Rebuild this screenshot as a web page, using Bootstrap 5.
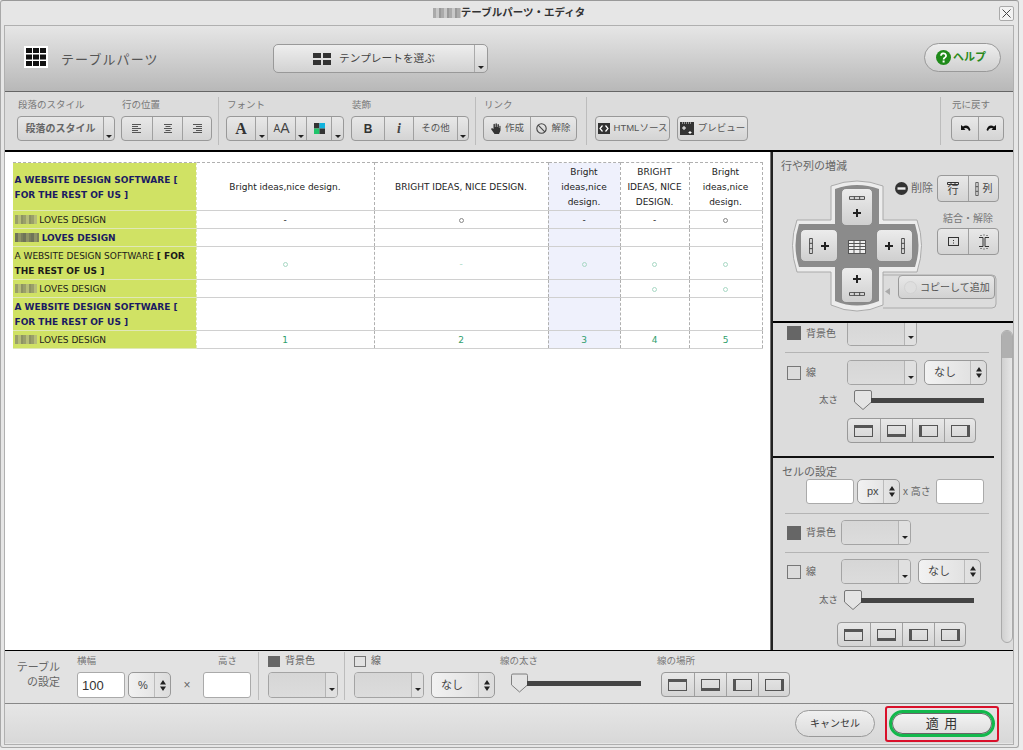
<!DOCTYPE html>
<html lang="ja">
<head>
<meta charset="utf-8">
<title>テーブルパーツ・エディタ</title>
<link href="https://cdn.jsdelivr.net/npm/bootstrap@5.3.0/dist/css/bootstrap.min.css" rel="stylesheet">
<style>
html,body{height:100%;overflow:hidden}
body{background:#ececec;font-family:"Liberation Sans","Noto Sans CJK JP",sans-serif;color:#666;font-size:10px}
svg{display:block;flex:none}
.win{width:1019px;height:748px;background:#e6e6e6;border:1px solid #a8a8a8;border-top-color:#999;border-radius:3px;padding:0 4px 0 3px}
.titlebar{height:24px;position:relative;font-size:10.5px;font-weight:700;color:#333}
.closer{position:absolute;right:0;top:5px;width:15px;height:15px;border:1px solid #aaa;border-radius:2px;background:#f2f2f2;padding:0}
.frame{width:1010px;height:720px;border:1px solid #b0b0b0}
.heading{height:66px;background:linear-gradient(#e6e6e6,#b8b8b8);border-bottom:1px solid #666;padding:18px 12px 0 19px}
.heading-title{font-size:13px;letter-spacing:1.1px;color:#555;margin:6px 0 0 13px;width:212px;flex:none}
.logo{margin-top:2px}
.tplbtn{width:215px;height:29px;border:1px solid #999;border-radius:5px;background:linear-gradient(#eee,#d2d2d2)}
.tplmain{width:201px;font-size:10.7px;color:#444;gap:8px}
.tplcaret{width:13px;border-left:1px solid #aaa}
.helpbtn{width:77px;height:29px;border:1px solid #999;border-radius:15px;background:linear-gradient(#eee,#d0d0d0);color:#2a8a1c;font-size:11px;font-weight:700;gap:2px;padding:0 0 0 11px;margin-top:-1px}
.toolbar{height:60px;background:#dcdcdc;border-bottom:2px solid #000;padding:0 0 0 12px}
.stack{padding-top:5px;flex:none}
.lbl{height:16px;line-height:16px;font-size:9.5px;color:#777;margin:0 0 3px 1px;white-space:nowrap}
.vsep{width:1px;height:48px;background:#bcbcbc;margin-top:5px;flex:none}
.tb.btn-group{height:25px;border:1px solid #999;border-radius:4px;background:linear-gradient(#e8e8e8,#d4d4d4);overflow:hidden;flex:none;vertical-align:top}
.tb.btn-group>.btn.tbtn{flex:none;height:100%;padding:0;border:0;border-left:1px solid #a0a0a0;border-radius:0;margin-left:0;background:transparent;color:#555;font-size:9.5px;display:flex;align-items:center;justify-content:center;white-space:nowrap}
.tb.btn-group>.btn.tbtn:first-child{border-left:0}
.tall.btn-group{height:27px}
.w11{width:11px}.w12{width:12px}.w26{width:26px}.w25{width:25px}.w28{width:28px}.w29{width:29px}.w30{width:30px}.w32{width:32px}.w44{width:44px}.w46{width:46px}.w85{width:85px}.w73{width:73px}.w69{width:69px}
.caret{width:0;height:0;border:3px solid transparent;border-top:3px solid #222;border-bottom:0;margin-top:15px}
.caret-low{margin-top:21px}
.boldjp{font-weight:700;font-size:10px;color:#666}
.main{height:498px}
.canvas{background:#fff;padding:10px 7px 0 8px;flex:none;width:765px}
.rule{width:2px;background:#222;flex:none;margin-left:1px;box-shadow:-1px 0 0 #777}
table.sheet{width:749px;table-layout:fixed;border-collapse:collapse;font-family:"DejaVu Sans",sans-serif;font-size:9px;line-height:15px;color:#222;margin:0}
table.sheet td{padding:2px 2px 0;text-align:center;vertical-align:middle;border:solid #d0d0d0;border-width:1px;border-left:1px dashed #b0b0b0;border-right:1px dashed #b0b0b0;background:#fff;box-shadow:none;color:#222}
table.sheet tr:first-child td{border-top:1px dashed #b0b0b0}
table.sheet td.side{background:#d0e264;text-align:left;color:#1a1a1a;border-color:#e0e8b8;border-left:0;padding-left:1.5px}
table.sheet td.side b{font-weight:700}
table.sheet td.navy{color:#1b1b62}
table.sheet td.sel{background:#eff1fc}
table.sheet td.grn{color:#2f9e6c}
table.sheet td.pale{color:#a8d8c4}
table.sheet td.gry{color:#888}
.ring{display:inline-block;width:5px;height:5px;border:1px solid currentColor;border-radius:50%;vertical-align:0}
.h49{height:48px}.h18{height:18px}.h33{height:33px}
.c1{width:183px}.c2{width:178px}.c3{width:174px}.c4{width:72px}.c5{width:69px}.c6{width:73px}
.pix{display:inline-block;width:22px;height:9px;vertical-align:-1px;filter:blur(.6px);background:repeating-linear-gradient(90deg,#9aa06a 0 3px,#b6bd78 3px 6px,#8d9362 6px 8px)}
.pix2{width:24px;background:repeating-linear-gradient(90deg,#6f7458 0 3px,#8e9366 3px 6px,#7a7f5c 6px 8px)}
.pix3{width:28px;height:10px;vertical-align:-2px;background:repeating-linear-gradient(90deg,#aaa 0 3px,#c8c8c8 3px 6px,#999 6px 8px)}
.side-panel{width:240px;background:#dcdcdc;flex:none}
.top-panel{height:171px;padding:6px 0 0 8px;border-bottom:2px solid #000}
.sec-title{height:16px;line-height:16px;font-size:11px;color:#666;white-space:nowrap}
.cross{position:relative;width:100px;height:133px;margin:6px 0 0 14px;flex:none}
.cross-art{position:absolute;left:0;top:0;overflow:visible}
.pad{position:absolute;border:1px solid #8a8a8a;border-radius:5px;background:linear-gradient(#ececec,#cfcfcf);padding:0;display:flex;flex-direction:column;align-items:center;justify-content:center;gap:8px}
.pad-h{flex-direction:row;gap:7px}
.pad-t{left:46px;top:8px;width:32px;height:38px}
.pad-l{left:5px;top:49px;width:38px;height:33px}
.pad-r{left:81px;top:49px;width:37px;height:33px}
.pad-b{left:46px;top:87px;width:32px;height:36px}
.pad-c{position:absolute;left:53px;top:60px}
.sidekeys{width:104px;margin-top:1px;flex:none}
.del-txt{font-size:11px;color:#666;margin:0 4px 0 3px}
.kk{font-size:11px;line-height:11px;color:#444}
.kk2{font-size:10px;color:#444}
.mergetxt{font-size:10px;color:#777;text-align:right;margin:9px 6px 2px 0;height:15px;line-height:15px}
.copybtn{width:97px;height:24px;margin:20px 0 0 3px;border:1px solid #999;border-radius:4px;background:linear-gradient(#e8e8e8,#d2d2d2);font-size:10px;color:#555;padding:0 0 0 5px;gap:3px;white-space:nowrap}
.ghost{width:13px;height:13px;border-radius:50%;background:#dedede;border:1px solid #d2d2d2;flex:none}
.scroller{height:327px;overflow:hidden;position:relative}
.scrollin{margin-top:-3px}
.track{position:absolute;left:228px;top:7px;width:12px;height:313px;border:1px solid #aaa;border-radius:6px;background:linear-gradient(90deg,#d0d0d0,#e6e6e6)}
.track::before{content:"";display:block;height:27px;background:#b0b0b0;border-radius:5px 5px 0 0}
.prow{display:flex;align-items:center;padding-left:14px}
.swatch{width:14px;height:14px;background:#666;flex:none}
.check{width:14px;height:14px;border:1px solid #777;background:transparent;flex:none}
.ptxt{font-size:10px;color:#666;margin-left:5px;flex:none}
.lb60{width:60px;flex:none;display:flex;align-items:center}
.lb54{width:54px;flex:none;display:flex;align-items:center}
.dd{width:70px;height:25px;border:1px solid #a4a4a4;border-radius:4px;background:#dcdcdc;display:flex;flex:none;overflow:hidden}
.dd-main{flex:1;background:linear-gradient(#d6d6d6,#dcdcdc)}
.dd-tail{width:12px;border-left:1px solid #b4b4b4;display:flex;justify-content:center;background:#e0e0e0}
.picker{height:25px;border:1px solid #999;border-radius:5px;background:linear-gradient(90deg,#f2f2f2,#dcdcdc);display:flex;flex:none;overflow:hidden;color:#444;font-size:11px}
.picker-main{flex:1;display:flex;align-items:center;padding-left:9px;line-height:1}
.picker-tail{width:16px;border-left:1px solid #bbb;display:flex;align-items:center;justify-content:center}
.w63{width:63px}.w64{width:64px}.w43{width:43px}
.hline{height:1px;background:#b4b4b4;border:0;opacity:1;margin:0 24px 0 12px}
.m6{margin-top:6px}.m7{margin-top:7px}.m5{margin-top:5px}.m8{margin-top:8px}.m9{margin-top:9px}.m12{margin-top:12px}
.gap-s{margin-left:7px}
.sizer{width:19px;font-size:9.5px;color:#666;flex:none;white-space:nowrap}
.slide{display:flex;align-items:center;flex:none}
.rail{height:5px;background:#444;margin-left:-1px;flex:none}
.rail113{width:113px}
.ml16{margin-left:16px}.ml6{margin-left:6px}
.chain-black{height:2px;background:#111;width:221px;margin-top:13px}
.fld.form-control{height:25px;width:48px;border:1px solid #aaa;border-radius:3px;background:#fff;padding:0 4px;font-family:"Liberation Sans",sans-serif;font-size:13px;color:#333;box-shadow:none;flex:none}
.cell-title{margin:6px 0 -1px 9px}
.size-row{padding-left:33px;gap:3px}
.xtxt{font-size:10px;color:#666;white-space:nowrap;width:30px;flex:none}
.bottom{height:54px;background:#e2e2e2;border-top:1px solid #000;border-bottom:1px solid #888;padding-left:11px}
.tset{width:44px;font-size:11px;line-height:15px;text-align:right;color:#666;flex:none;margin-top:9px;white-space:nowrap}
.bstack{padding-top:2px;flex:none}
.blbl{height:16px;line-height:16px;font-size:9.5px;color:#777;white-space:nowrap;margin-bottom:3px;display:flex;align-items:center}
.f26.form-control,.f26{height:26px}
.footer-bar{height:39px;background:linear-gradient(#e6e6e6,#d8d8d8);padding-right:14px}
.cancel{width:80px;height:27px;border:1px solid #999;border-radius:14px;background:linear-gradient(#f0f0f0,#dcdcdc);font-size:10px;font-weight:400;color:#333;padding:0;margin-right:10px}
.redbox{border:2px solid #d9102a;border-radius:3px;padding:2px;width:114px;height:36px;display:flex;align-items:center;justify-content:center}
.apply{width:109px;height:27px;border:3px solid #12b84c;border-radius:14px;background:linear-gradient(#f4f4f4,#dedede);font-size:13px;letter-spacing:1px;color:#333;padding:0;box-shadow:0 0 0 1px #666 inset}
.ms6x{margin-left:6px}
.w-stack{width:98px}
.sep-a{margin-left:6px}
.sec-b{margin-left:7px;width:117px}
.sec-c{margin-left:8px;width:117px}
.sep-d{margin-left:7px}
.sec-d{margin-left:7px;width:95px}
.sep-e{margin-left:8px}
.sec-e{margin-left:8px}
.gap-s2{gap:7px}
.sep-f{margin-left:auto}
.sec-f{margin-left:10px;margin-right:9px}
.fa-a{font-family:"Liberation Serif",serif;font-weight:700;font-size:16px;color:#333}
.fa-s{font-size:10px;color:#444;line-height:1;align-self:flex-end;margin-bottom:6px}
.fa-l{font-size:14px;color:#444;line-height:1;align-self:flex-end;margin-bottom:5px}
.fa-b{font-size:12px;color:#333}
.fa-i{font-family:"Liberation Serif",serif;font-size:14px;font-weight:700;color:#444}
.sl-a,.sl-b{padding-left:46px}
.bd-a{margin-left:74px;display:flex;width:129px}
.bd-b{margin-left:64px;display:flex;width:129px}
.dd-h26{height:26px}
.tall-lbl{margin-left:122px}
.st-size{margin-left:17px;width:174px}
.ms-1x{margin-left:3px}
.times{width:32px;text-align:center;font-size:12px;color:#666;flex:none}
.sep-g{margin:1px 0 0 7px}
.st-bg{margin-left:9px}
.sw12{width:12px;height:11px}
.sep-g2{margin:1px 0 0 6px}
.st-line{margin-left:9px}
.st-thick{margin-left:5px}
.sl-c{padding-left:11px;margin-top:4px}
.rail-c{width:114px}
.st-where{margin-left:16px}
.bd-c{margin-left:4px;display:flex;width:129px}
</style>
</head>
<body>
<svg width="0" height="0" class="position-absolute">
  <defs>
    <symbol id="alL" viewBox="0 0 10 11"><path d="M0 1.500h9M0 3.500h6M0 5.500h9M0 7.500h6M0 9.500h9" stroke="#555" fill="none"/></symbol>
    <symbol id="alC" viewBox="0 0 10 11"><path d="M1 1.500h8M2.500 3.500h5M1 5.500h8M2.500 7.500h5M1 9.500h8" stroke="#555" fill="none"/></symbol>
    <symbol id="alR" viewBox="0 0 10 11"><path d="M1 1.500h9M4 3.500h6M1 5.500h9M4 7.500h6M1 9.500h9" stroke="#555" fill="none"/></symbol>
    <symbol id="plus" viewBox="0 0 10 10"><path d="M5 1v8M1 5h8" stroke="#222" stroke-width="2" fill="none"/></symbol>
    <symbol id="hbar" viewBox="0 0 18 4"><path d="M.5.500h17v3H.5zM6 .5v3M12 .5v3" fill="#eee" stroke="#333"/></symbol>
    <symbol id="vbar" viewBox="0 0 4 18"><path d="M.5.500h3v17h-3zM.5 6h3M.5 12h3" fill="#eee" stroke="#333"/></symbol>
    <symbol id="bT" viewBox="0 0 20 12"><rect x=".5" y=".5" width="18" height="11" fill="none" stroke="#555"/><rect width="19" height="3" fill="#555"/></symbol>
    <symbol id="bB" viewBox="0 0 20 12"><rect x=".5" y=".5" width="18" height="11" fill="none" stroke="#555"/><rect y="9" width="19" height="3" fill="#555"/></symbol>
    <symbol id="bL" viewBox="0 0 20 12"><rect x=".5" y=".5" width="18" height="11" fill="none" stroke="#555"/><rect width="3" height="12" fill="#555"/></symbol>
    <symbol id="bR" viewBox="0 0 20 12"><rect x=".5" y=".5" width="18" height="11" fill="none" stroke="#555"/><rect x="16" width="3" height="12" fill="#555"/></symbol>
    <symbol id="thumb" viewBox="0 0 18 20"><path d="M2 .5h14a1.500 1.500 0 0 1 1.500 1.500v10l-8.500 7.500L.5 12V2A1.500 1.500 0 0 1 2 .5z" fill="#e4e4e4" stroke="#777"/></symbol>
    <symbol id="updown" viewBox="0 0 6 11"><path d="M3 0l3 4.500H0zM3 11l3-4.500H0z" fill="#222"/></symbol>
  </defs>
</svg>
<div class="win">
  <div class="titlebar d-flex align-items-center justify-content-center">
    <span class="pix pix3"></span><span>テーブルパーツ・エディタ</span>
    <button class="closer d-flex align-items-center justify-content-center" aria-label="閉じる">
      <svg width="11" height="11" viewBox="0 0 11 11"><path d="M1.500 1.500l8 8M9.500 1.500l-8 8" stroke="#444" fill="none"/></svg>
    </button>
  </div>
  <div class="frame d-flex flex-column">
    <div class="heading d-flex align-items-start">
      <svg class="logo" width="24" height="22" viewBox="0 0 24 22"><rect width="24" height="22" fill="#fff"/><path d="M2 2h6v5H2zM9 2h6v5H9zM16 2h6v5h-6zM2 8.500h6v5H2zM9 8.500h6v5H9zM16 8.500h6v5h-6zM2 15h6v5H2zM9 15h6v5H9zM16 15h6v5h-6z" fill="#111"/></svg>
      <div class="heading-title">テーブルパーツ</div>
      <div class="tplbtn d-flex">
        <div class="tplmain d-flex align-items-center justify-content-center">
          <svg width="18" height="12" viewBox="0 0 18 12"><path d="M0 0h8v5H0zM10 0h8v5h-8zM0 7h8v5H0zM10 7h8v5h-8z" fill="#333"/></svg>
          <span>テンプレートを選ぶ</span>
        </div>
        <div class="tplcaret d-flex justify-content-center"><i class="caret caret-low"></i></div>
      </div>
      <button class="helpbtn btn ms-auto d-flex align-items-center">
        <svg width="15" height="15" viewBox="0 0 15 15"><circle cx="7.500" cy="7.500" r="7.500" fill="#1f8a1a"/><path d="M5 5.700a2.500 2.300 0 1 1 3.700 2c-.8.500-1.100.9-1.100 1.800" stroke="#fff" stroke-width="1.700" fill="none"/><rect x="6.600" y="10.500" width="2" height="2" fill="#fff"/></svg>
        <span>ヘルプ</span>
      </button>
    </div>
    <div class="toolbar d-flex">
      <div class="stack w-stack">
        <div class="lbl">段落のスタイル</div>
        <div class="btn-group tb">
          <button class="btn tbtn w85"><span class="boldjp">段落のスタイル</span></button>
          <button class="btn tbtn w11" aria-label="開く"><i class="caret"></i></button>
        </div>
      </div>
      <div class="stack ms6x">
        <div class="lbl">行の位置</div>
        <div class="btn-group tb">
          <button class="btn tbtn w30" aria-label="左"><svg width="10" height="11"><use href="#alL"/></svg></button>
          <button class="btn tbtn w30" aria-label="中央"><svg width="10" height="11"><use href="#alC"/></svg></button>
          <button class="btn tbtn w29" aria-label="右"><svg width="10" height="11"><use href="#alR"/></svg></button>
        </div>
      </div>
      <div class="vsep sep-a"></div>
      <div class="stack sec-b">
        <div class="lbl">フォント</div>
        <div class="btn-group tb">
          <button class="btn tbtn w28"><span class="fa-a">A</span></button>
          <button class="btn tbtn w12" aria-label="開く"><i class="caret"></i></button>
          <button class="btn tbtn w28"><span class="fa-s">A</span><span class="fa-l">A</span></button>
          <button class="btn tbtn w11" aria-label="開く"><i class="caret"></i></button>
          <button class="btn tbtn w25" aria-label="色"><svg width="11" height="11" viewBox="0 0 11 11"><rect width="5.500" height="5.500" fill="#333"/><rect x="5.500" width="5.500" height="5.500" fill="#11b3dd"/><rect y="5.500" width="5.500" height="5.500" fill="#1fc46a"/><rect x="5.500" y="5.500" width="5.500" height="5.500" fill="#333"/></svg></button>
          <button class="btn tbtn w12" aria-label="開く"><i class="caret"></i></button>
        </div>
      </div>
      <div class="stack sec-c">
        <div class="lbl">装飾</div>
        <div class="btn-group tb">
          <button class="btn tbtn w32"><b class="fa-b">B</b></button>
          <button class="btn tbtn w29"><i class="fa-i">i</i></button>
          <button class="btn tbtn w44">その他</button>
          <button class="btn tbtn w11" aria-label="開く"><i class="caret"></i></button>
        </div>
      </div>
      <div class="vsep sep-d"></div>
      <div class="stack sec-d">
        <div class="lbl">リンク</div>
        <div class="btn-group tb">
          <button class="btn tbtn w46 gap-1"><svg width="11" height="11" viewBox="0 0 11 11"><path d="M1 6l1-1 1.500 1V1.500a.7.700 0 0 1 1.400 0V4h.6V1a.7.700 0 0 1 1.400 0v3h.6V1.700a.7.700 0 0 1 1.400 0V5h.5V3a.6.600 0 0 1 1.100 0v4.500L9 11H4.500z" fill="#333"/></svg>作成</button>
          <button class="btn tbtn w46 gap-1"><svg width="11" height="11" viewBox="0 0 11 11"><circle cx="5.500" cy="5.500" r="4.700" fill="none" stroke="#444" stroke-width="1.100"/><path d="M2.200 2.200l6.600 6.600" stroke="#444" stroke-width="1.100"/></svg>解除</button>
        </div>
      </div>
      <div class="vsep sep-e"></div>
      <div class="stack sec-e">
        <div class="lbl">&nbsp;</div>
        <div class="d-flex gap-s2">
          <div class="btn-group tb"><button class="btn tbtn w73 gap-1"><svg width="12" height="11" viewBox="0 0 12 11"><rect width="12" height="11" fill="#333"/><path d="M4.500 2.500L2 5.500l2.500 3M7.500 2.500l2.500 3-2.500 3" stroke="#fff" stroke-width="1.200" fill="none"/></svg>HTMLソース</button></div>
          <div class="btn-group tb"><button class="btn tbtn w69 gap-1"><svg width="14" height="13" viewBox="0 0 14 13"><rect width="14" height="13" fill="#333"/><path d="M2 1h10" stroke="#eee" stroke-dasharray="1 1"/><path d="M4 4v4M2 6h4M10 9v3M8.500 10.500h3" stroke="#fff"/></svg>プレビュー</button></div>
        </div>
      </div>
      <div class="vsep sep-f"></div>
      <div class="stack sec-f">
        <div class="lbl">元に戻す</div>
        <div class="btn-group tb">
          <button class="btn tbtn w26" aria-label="戻す"><svg width="11" height="9" viewBox="0 0 11 9"><path d="M1 1v5h4.500L4 4.500c1.800-1 3.800-.6 5 2.500l1.500-1C9.200 1.500 6 .6 3 2.600z" fill="#111"/></svg></button>
          <button class="btn tbtn w25" aria-label="進む"><svg width="11" height="9" viewBox="0 0 11 9"><path d="M10 1v5H5.500L7 4.500C5.200 3.500 3.200 3.900 2 7L.5 6C1.800 1.500 5 .6 8 2.600z" fill="#111"/></svg></button>
        </div>
      </div>
    </div>
    <div class="main d-flex">
      <div class="canvas">
        <table class="table sheet">
          <colgroup><col class="c1"><col class="c2"><col class="c3"><col class="c4"><col class="c5"><col class="c6"></colgroup>
          <tbody>
          <tr class="h49"><td class="side navy"><b>A WEBSITE DESIGN SOFTWARE [<br>FOR THE REST OF US ]</b></td><td>Bright ideas,nice design.</td><td>BRIGHT IDEAS, NICE DESIGN.</td><td class="sel">Bright<br>ideas,nice<br>design.</td><td>BRIGHT<br>IDEAS, NICE<br>DESIGN.</td><td>Bright<br>ideas,nice<br>design.</td></tr>
          <tr class="h18"><td class="side"><span class="pix"></span> LOVES DESIGN</td><td>-</td><td class="gry"><i class="ring"></i></td><td class="sel">-</td><td>-</td><td class="gry"><i class="ring"></i></td></tr>
          <tr class="h18"><td class="side navy"><b><span class="pix pix2"></span> LOVES DESIGN</b></td><td></td><td></td><td class="sel"></td><td></td><td></td></tr>
          <tr class="h33"><td class="side">A WEBSITE DESIGN SOFTWARE <b>[ FOR<br>THE REST OF US ]</b></td><td class="pale"><i class="ring"></i></td><td class="pale">-</td><td class="sel pale"><i class="ring"></i></td><td class="pale"><i class="ring"></i></td><td class="pale"><i class="ring"></i></td></tr>
          <tr class="h18"><td class="side"><span class="pix"></span> LOVES DESIGN</td><td></td><td></td><td class="sel"></td><td class="pale"><i class="ring"></i></td><td class="pale"><i class="ring"></i></td></tr>
          <tr class="h33"><td class="side navy"><b>A WEBSITE DESIGN SOFTWARE [<br>FOR THE REST OF US ]</b></td><td></td><td></td><td class="sel"></td><td></td><td></td></tr>
          <tr class="h18"><td class="side"><span class="pix"></span> LOVES DESIGN</td><td class="grn">1</td><td class="grn">2</td><td class="sel grn">3</td><td class="grn">4</td><td class="grn">5</td></tr>
          </tbody>
        </table>
      </div>
      <div class="rule"></div>
      <div class="side-panel">
        <div class="top-panel">
          <div class="sec-title">行や列の増減</div>
          <div class="d-flex">
            <div class="cross">
              <svg class="cross-art" width="204" height="133" viewBox="0 0 204 133">
                <path d="M84 95H197a4 4 0 0 1 4 4V124a4 4 0 0 1-4 4H88" fill="none" stroke="#aaa"/>
                <path d="M36 6Q62-4 88 6V40H122Q131 65 122 92H88V125Q62 137 36 125V92H2Q-7 65 2 40H36Z" fill="#ececec" stroke="#aaa"/>
                <path d="M40 9Q62 1 84 9V44H120Q127 65 120 87H84V121Q62 130 40 121V87H4Q-3 65 4 44H40Z" fill="#8b8b8b"/>
                <path d="M95 108l-5 3.500 5 3.500z" fill="#aaa"/>
              </svg>
              <button class="pad pad-t" aria-label="行を上に追加"><svg width="16" height="4"><use href="#hbar"/></svg><svg width="10" height="10"><use href="#plus"/></svg></button>
              <button class="pad pad-h pad-l" aria-label="列を左に追加"><svg width="4" height="16"><use href="#vbar"/></svg><svg width="10" height="10"><use href="#plus"/></svg></button>
              <svg class="pad-c" width="18" height="14" viewBox="0 0 18 14"><rect x=".5" y=".5" width="17" height="13" fill="#eee" stroke="#555"/><path d="M.5 3.500h17M.5 6.500h17M.5 9.500h17M6 .5v13M12 .5v13" stroke="#555"/></svg>
              <button class="pad pad-h pad-r" aria-label="列を右に追加"><svg width="10" height="10"><use href="#plus"/></svg><svg width="4" height="16"><use href="#vbar"/></svg></button>
              <button class="pad pad-b" aria-label="行を下に追加"><svg width="10" height="10"><use href="#plus"/></svg><svg width="16" height="4"><use href="#hbar"/></svg></button>
            </div>
            <div class="sidekeys">
              <div class="d-flex align-items-center">
                <svg width="13" height="13" viewBox="0 0 13 13"><circle cx="6.500" cy="6.500" r="6.500" fill="#333"/><rect x="2.500" y="5.300" width="8" height="2.400" fill="#eee"/></svg>
                <span class="del-txt">削除</span>
                <div class="btn-group tb tall">
                  <button class="btn tbtn w30 flex-column" aria-label="行"><svg width="12" height="3" viewBox="0 0 12 3"><path d="M.5.500h11v2H.5zM4 .5v2M8 .5v2" fill="none" stroke="#333"/></svg><span class="kk">行</span></button>
                  <button class="btn tbtn w30 gap-1"><svg width="4" height="14"><use href="#vbar"/></svg><span class="kk2">列</span></button>
                </div>
              </div>
              <div class="mergetxt">結合・解除</div>
              <div class="d-flex justify-content-end">
                <div class="btn-group tb tall">
                  <button class="btn tbtn w30" aria-label="結合"><svg width="11" height="9" viewBox="0 0 11 9"><rect x=".5" y=".5" width="10" height="8" fill="none" stroke="#333"/><path d="M5.500 3v1M5.500 5.500v1" stroke="#333"/></svg></button>
                  <button class="btn tbtn w30" aria-label="解除"><svg width="16" height="16" viewBox="0 0 16 16"><path d="M3 3.500H7V12.500H3M13 3.500H9V12.500H13M5 1v1M8 .5v1M11 1v1M5 14v1M8 14.500v1M11 14v1" fill="none" stroke="#333"/></svg></button>
                </div>
              </div>
              <button class="copybtn btn d-flex align-items-center"><i class="ghost"></i><span>コピーして追加</span></button>
            </div>
          </div>
        </div>
        <div class="scroller">
          <div class="scrollin">
            <div class="prow"><div class="lb60"><i class="swatch"></i><span class="ptxt">背景色</span></div><div class="dd dd-h26"><div class="dd-main"></div><div class="dd-tail"><i class="caret"></i></div></div></div>
            <hr class="hline m6">
            <div class="prow m7"><div class="lb60"><i class="check"></i><span class="ptxt">線</span></div><div class="dd"><div class="dd-main"></div><div class="dd-tail"><i class="caret"></i></div></div><div class="picker w63 gap-s"><div class="picker-main">なし</div><div class="picker-tail"><svg width="6" height="11"><use href="#updown"/></svg></div></div></div>
            <div class="slide m5 sl-a"><span class="sizer">太さ</span><svg class="ml16" width="18" height="20"><use href="#thumb"/></svg><div class="rail rail113"></div></div>
            <div class="btn-group tb m8 bd-a">
              <button class="btn tbtn w32" aria-label="上"><svg width="20" height="12"><use href="#bT"/></svg></button><button class="btn tbtn w32" aria-label="下"><svg width="20" height="12"><use href="#bB"/></svg></button><button class="btn tbtn w32" aria-label="左"><svg width="20" height="12"><use href="#bL"/></svg></button><button class="btn tbtn w32" aria-label="右"><svg width="20" height="12"><use href="#bR"/></svg></button>
            </div>
            <div class="chain-black"></div>
            <div class="sec-title cell-title">セルの設定</div>
            <div class="prow size-row">
              <input class="form-control fld" type="text" aria-label="横幅">
              <div class="picker w43"><div class="picker-main">px</div><div class="picker-tail"><svg width="6" height="11"><use href="#updown"/></svg></div></div>
              <span class="xtxt">x 高さ</span>
              <input class="form-control fld" type="text" aria-label="高さ">
            </div>
            <hr class="hline m9">
            <div class="prow m6"><div class="lb54"><i class="swatch"></i><span class="ptxt">背景色</span></div><div class="dd"><div class="dd-main"></div><div class="dd-tail"><i class="caret"></i></div></div></div>
            <hr class="hline m7">
            <div class="prow m6"><div class="lb54"><i class="check"></i><span class="ptxt">線</span></div><div class="dd"><div class="dd-main"></div><div class="dd-tail"><i class="caret"></i></div></div><div class="picker w63 gap-s"><div class="picker-main">なし</div><div class="picker-tail"><svg width="6" height="11"><use href="#updown"/></svg></div></div></div>
            <div class="slide m6 sl-b"><span class="sizer">太さ</span><svg class="ml6" width="18" height="20"><use href="#thumb"/></svg><div class="rail rail113"></div></div>
            <div class="btn-group tb m12 bd-b">
              <button class="btn tbtn w32" aria-label="上"><svg width="20" height="12"><use href="#bT"/></svg></button><button class="btn tbtn w32" aria-label="下"><svg width="20" height="12"><use href="#bB"/></svg></button><button class="btn tbtn w32" aria-label="左"><svg width="20" height="12"><use href="#bL"/></svg></button><button class="btn tbtn w32" aria-label="右"><svg width="20" height="12"><use href="#bR"/></svg></button>
            </div>
          </div>
          <div class="track"></div>
        </div>
      </div>
    </div>
    <div class="bottom d-flex">
      <div class="tset">テーブル<br>の設定</div>
      <div class="bstack st-size">
        <div class="blbl"><span>横幅</span><span class="tall-lbl">高さ</span></div>
        <div class="d-flex align-items-center">
          <input class="form-control fld f26" type="text" value="100" aria-label="横幅">
          <div class="picker w43 f26 ms-1x"><div class="picker-main">%</div><div class="picker-tail"><svg width="6" height="11"><use href="#updown"/></svg></div></div>
          <span class="times">×</span>
          <input class="form-control fld f26" type="text" aria-label="高さ">
        </div>
      </div>
      <div class="vsep sep-g"></div>
      <div class="bstack st-bg">
        <div class="blbl"><i class="swatch sw12"></i><span class="ptxt">背景色</span></div>
        <div class="dd f26"><div class="dd-main"></div><div class="dd-tail"><i class="caret"></i></div></div>
      </div>
      <div class="vsep sep-g2"></div>
      <div class="bstack st-line">
        <div class="blbl"><i class="check sw12"></i><span class="ptxt">線</span></div>
        <div class="d-flex"><div class="dd f26"><div class="dd-main"></div><div class="dd-tail"><i class="caret"></i></div></div><div class="picker w64 f26 gap-s"><div class="picker-main">なし</div><div class="picker-tail"><svg width="6" height="11"><use href="#updown"/></svg></div></div></div>
      </div>
      <div class="bstack st-thick">
        <div class="blbl">線の太さ</div>
        <div class="slide sl-c"><svg width="17" height="20"><use href="#thumb"/></svg><div class="rail rail-c"></div></div>
      </div>
      <div class="bstack st-where">
        <div class="blbl">線の場所</div>
        <div class="btn-group tb f26 bd-c">
          <button class="btn tbtn w32" aria-label="上"><svg width="20" height="12"><use href="#bT"/></svg></button><button class="btn tbtn w32" aria-label="下"><svg width="20" height="12"><use href="#bB"/></svg></button><button class="btn tbtn w32" aria-label="左"><svg width="20" height="12"><use href="#bL"/></svg></button><button class="btn tbtn w32" aria-label="右"><svg width="20" height="12"><use href="#bR"/></svg></button>
        </div>
      </div>
    </div>
    <div class="footer-bar d-flex justify-content-end align-items-center">
      <button class="btn cancel">キャンセル</button>
      <div class="redbox"><button class="btn apply">適 用</button></div>
    </div>
  </div>
</div>
</body>
</html>
